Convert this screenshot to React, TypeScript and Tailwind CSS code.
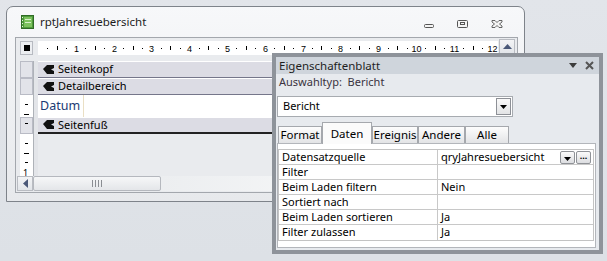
import React from "react";

const CM = 37.8;

const BookIcon = () => (
  <svg width="13" height="14" viewBox="0 0 13 14">
    <rect x="0.5" y="0.5" width="12" height="13" fill="#4f9a3c" stroke="#2f6b25" />
    <rect x="3" y="2" width="8" height="10" fill="#7cc25e" />
    <rect x="4" y="4" width="6" height="1" fill="#d9f0cc" />
    <rect x="4" y="7" width="6" height="1" fill="#d9f0cc" />
    <rect x="1" y="2" width="1" height="1" fill="#e6f5dc" />
    <rect x="1" y="5" width="1" height="1" fill="#e6f5dc" />
    <rect x="1" y="8" width="1" height="1" fill="#e6f5dc" />
    <rect x="1" y="11" width="1" height="1" fill="#e6f5dc" />
  </svg>
);

const SectionMark = () => (
  <svg width="11" height="10" viewBox="0 0 11 10" className="shrink-0">
    <polygon points="0,4 4,0 11,0 11,3 8,4.5 11,6 11,9 4,9" fill="#111" />
  </svg>
);

const Ruler = () => {
  const items: React.ReactNode[] = [];
  for (let i = 0; i < 13; i++) {
    const b = i * CM;
    items.push(<rect key={`a${i}`} x={Math.round(b + CM * 0.25)} y={7} width={1} height={1} fill="#000" />);
    items.push(<rect key={`b${i}`} x={Math.round(b + CM * 0.5)} y={5} width={1} height={4} fill="#000" />);
    items.push(<rect key={`c${i}`} x={Math.round(b + CM * 0.75)} y={7} width={1} height={1} fill="#000" />);
    if (i > 0) {
      items.push(
        <text key={`t${i}`} x={Math.round(b) + 0.5} y={11} fontSize="9" textAnchor="middle" fill="#000" fontFamily="Liberation Sans, sans-serif">
          {i}
        </text>
      );
    }
  }
  return (
    <svg width="460" height="14" className="block bg-white">
      {items}
    </svg>
  );
};

const VTicks = ({ top, label }: { top: number; label?: string }) => (
  <div className="relative h-full w-[13px] bg-white">
    <div className="absolute left-[5px] h-px w-[3px] bg-black" style={{ top: Math.round(top + CM * 0.25) }} />
    <div className="absolute left-[4px] h-px w-[5px] bg-black" style={{ top: Math.round(top + CM * 0.5) }} />
    <div className="absolute left-[5px] h-px w-[3px] bg-black" style={{ top: Math.round(top + CM * 0.75) }} />
    {label && (
      <span className="absolute left-[3px] text-[9px] leading-none text-black" style={{ top: Math.round(top + CM) - 4 }}>
        {label}
      </span>
    )}
  </div>
);

const SectionHeader = ({ label, last }: { label: string; last?: boolean }) => (
  <div className="flex h-[17px]">
    <div className="ml-[4px] w-[13px] border border-[#b9bbc5] bg-[#e2e3e9]" />
    <div className="w-[5px] border-l border-[#aeb2b8] bg-[#e3e5e9]" />
    <div
      className={`flex flex-1 items-center gap-[4px] border-t border-white bg-[#dcdce4] pl-[5px] text-[11px] text-black ${
        last ? "border-b-2 border-b-[#222]" : "border-b border-b-[#75768a]"
      }`}
    >
      <SectionMark />
      <span>{label}</span>
    </div>
  </div>
);

const ReportWindow = () => (
  <div className="absolute left-[6px] top-[6px] flex h-[196px] w-[519px] flex-col rounded-t-[7px] border border-[#7e838a] bg-gradient-to-b from-[#f7f8fa] to-[#e7e9ec]">
    <div className="flex h-[30px] shrink-0 items-center pl-[14px] pr-[21px]">
      <BookIcon />
      <span className="ml-[6px] text-[11.5px] text-[#1c1c1c]">rptJahresuebersicht</span>
      <div className="ml-auto flex items-center gap-[22px]">
        <svg width="12" height="12" viewBox="0 0 12 12">
          <rect x="1.5" y="8.5" width="9" height="3" rx="1" fill="#f4f4f4" stroke="#555" />
        </svg>
        <svg width="12" height="12" viewBox="0 0 12 12">
          <rect x="0.5" y="4.5" width="10" height="7" rx="1" fill="#f4f4f4" stroke="#555" />
          <rect x="3.5" y="6.5" width="4" height="2" fill="none" stroke="#555" />
        </svg>
        <svg width="12" height="12" viewBox="0 0 12 12">
          <path d="M1 4.5h3l2 2 2-2h3v1.5l-2.5 2 2.5 2v1.5h-3l-2-2-2 2h-3v-1.5l2.5-2-2.5-2z" fill="#f4f4f4" stroke="#555" strokeWidth="0.9" />
        </svg>
      </div>
    </div>
    <div className="ml-[8px] mr-[6px] flex h-[156px] shrink-0 flex-col border border-[#a3a7ad] bg-[#e9ebee]">
      <div className="flex h-[138px]">
        <div className="flex w-[482px] flex-col">
          <div className="flex h-[23px] pt-[3px]">
            <div className="ml-[4px] flex h-[14px] w-[13px] items-center justify-center border border-[#b7bac1] bg-[#eceef1]">
              <div className="h-[6px] w-[6px] bg-black" />
            </div>
            <div className="ml-[5px]">
              <Ruler />
            </div>
          </div>
          <SectionHeader label="Seitenkopf" />
          <SectionHeader label="Detailbereich" />
          <div className="flex h-[22px]">
            <div className="ml-[4px]">
              <VTicks top={0} />
            </div>
            <div className="w-[5px] border-l border-[#aeb2b8] bg-[#e3e5e9]" />
            <div className="flex flex-1 bg-white">
              <div className="flex w-[46px] items-center border-r border-[#eadfc4] pl-[2px] font-['Noto_Sans',sans-serif] text-[12.5px] text-[#1b3a73]">
                Datum
              </div>
            </div>
          </div>
          <SectionHeader label="Seitenfuß" last />
          <div className="flex flex-1">
            <div className="ml-[4px]">
              <VTicks top={0} label="1" />
            </div>
            <div className="w-[5px] border-l border-[#aeb2b8] bg-[#e3e5e9]" />
            <div className="flex-1 bg-[#e9ebee]" />
          </div>
        </div>
        <div className="ml-[1px] flex w-[16px] flex-col">
          <div className="mt-[1px] flex h-[15px] items-center justify-center border border-[#b9bcc2] bg-gradient-to-b from-[#f3f4f6] to-[#e2e5e9]">
            <svg width="9" height="5" viewBox="0 0 9 5">
              <polygon points="0,5 4.5,0 9,5" fill="#4a5878" />
            </svg>
          </div>
          <div className="flex-1 bg-[#eceef1]" />
        </div>
      </div>
      <div className="flex h-[15px] pl-[1px]">
        <div className="flex w-[16px] items-center justify-center border border-[#b9bcc2] bg-gradient-to-b from-[#f3f4f6] to-[#e2e5e9]">
          <svg width="5" height="9" viewBox="0 0 5 9">
            <polygon points="5,0 0,4.5 5,9" fill="#4a5878" />
          </svg>
        </div>
        <div className="flex w-[128px] items-center justify-center gap-[2px] rounded-[2px] border border-[#b5b8be] bg-gradient-to-b from-[#f6f7f8] to-[#e4e6e9]">
          <div className="h-[7px] w-px bg-[#8a8d92]" />
          <div className="h-[7px] w-px bg-[#8a8d92]" />
          <div className="h-[7px] w-px bg-[#8a8d92]" />
          <div className="h-[7px] w-px bg-[#8a8d92]" />
        </div>
        <div className="flex-1 bg-gradient-to-r from-[#eceef0] to-[#ffffff]" />
      </div>
    </div>
  </div>
);

const tabs = [
  { label: "Format", w: "w-[44px]" },
  { label: "Daten", w: "w-[50px]", active: true },
  { label: "Ereignis", w: "w-[46px]" },
  { label: "Andere", w: "w-[47px]" },
  { label: "Alle", w: "w-[44px]" },
];

const rows: [string, string][] = [
  ["Datensatzquelle", "qryJahresuebersicht"],
  ["Filter", ""],
  ["Beim Laden filtern", "Nein"],
  ["Sortiert nach", ""],
  ["Beim Laden sortieren", "Ja"],
  ["Filter zulassen", "Ja"],
];

const SmallButton = ({ children }: { children: React.ReactNode }) => (
  <div className="flex h-[13px] w-[15px] items-center justify-center rounded-[2px] border border-[#8f9297] bg-gradient-to-b from-[#fbfbfb] to-[#dcdde0]">
    {children}
  </div>
);

const PropertySheet = () => (
  <div className="absolute left-[272px] top-[53px] flex h-[201px] w-[331px] flex-col border-4 border-[#8e939a] bg-[#e7eaee] text-[11px] text-black">
    <div className="flex h-[17px] shrink-0 items-center bg-[#cfd5dc] pl-[3px] pr-[5px]">
      <span className="text-[11.5px] text-[#1e1e1e]">Eigenschaftenblatt</span>
      <div className="ml-auto flex items-center gap-[8px]">
        <svg width="8" height="5" viewBox="0 0 8 5">
          <polygon points="0,0 8,0 4,5" fill="#3c3c3c" />
        </svg>
        <svg width="9" height="9" viewBox="0 0 9 9">
          <path d="M1 1L8 8M8 1L1 8" stroke="#555" strokeWidth="2" />
        </svg>
      </div>
    </div>
    <div className="flex h-[17px] shrink-0 items-center pl-[3px] text-[#3a3340]">
      Auswahltyp:&nbsp;&nbsp;Bericht
    </div>
    <div className="ml-[1px] mt-[5px] flex h-[21px] w-[236px] shrink-0 items-center border border-[#a7abb0] bg-white pl-[5px] pr-[1px]">
      <span>Bericht</span>
      <div className="ml-auto flex h-[17px] w-[15px] items-center justify-center border border-[#8d9096] bg-gradient-to-b from-[#fafafa] to-[#e2e3e5]">
        <svg width="7" height="4" viewBox="0 0 7 4">
          <polygon points="0,0 7,0 3.5,4" fill="#000" />
        </svg>
      </div>
    </div>
    <div className="ml-[2px] mt-[5px] flex h-[21px] shrink-0 items-end">
      {tabs.map((t) =>
        t.active ? (
          <div
            key={t.label}
            className={`${t.w} relative z-10 -mb-px flex h-[22px] items-start justify-center border border-b-0 border-[#a5a8ad] bg-[#fbfbfb] pt-[2px] text-[11.5px]`}
          >
            {t.label}
          </div>
        ) : (
          <div
            key={t.label}
            className={`${t.w} flex h-[17px] items-center justify-center border border-b-0 border-[#a5a8ad] bg-gradient-to-b from-[#fdfdfd] to-[#e3e4e6] text-[11.5px]`}
          >
            {t.label}
          </div>
        )
      )}
    </div>
    <div className="ml-[1px] flex h-[105px] w-[319px] shrink-0 flex-col border border-[#b3b6bb] bg-white pr-[1px] pt-[5px]">
      <div className="flex flex-col border border-[#c3c3c3]">
        {rows.map(([k, v], i) => (
          <div key={k} className={`flex h-[15px] ${i < rows.length - 1 ? "border-b border-[#c8c8c8]" : ""}`}>
            <div className="flex w-[159px] items-center border-r border-[#c8c8c8] pl-[3px]">{k}</div>
            <div className="flex flex-1 items-center pl-[3px]">
              <span>{v}</span>
              {i === 0 && (
                <div className="ml-auto mr-[2px] flex gap-px">
                  <SmallButton>
                    <svg width="7" height="4" viewBox="0 0 7 4" className="mt-[4px]">
                      <polygon points="0,0 7,0 3.5,4" fill="#000" />
                    </svg>
                  </SmallButton>
                  <SmallButton>
                    <span className="text-[9px] font-bold leading-none">···</span>
                  </SmallButton>
                </div>
              )}
            </div>
          </div>
        ))}
      </div>
    </div>
  </div>
);

export default function App() {
  return (
    <div className="relative h-[261px] w-[607px] overflow-hidden bg-gradient-to-b from-[#e2e5ea] to-[#dde1e6] font-['Noto_Sans',sans-serif]">
      <ReportWindow />
      <PropertySheet />
    </div>
  );
}
